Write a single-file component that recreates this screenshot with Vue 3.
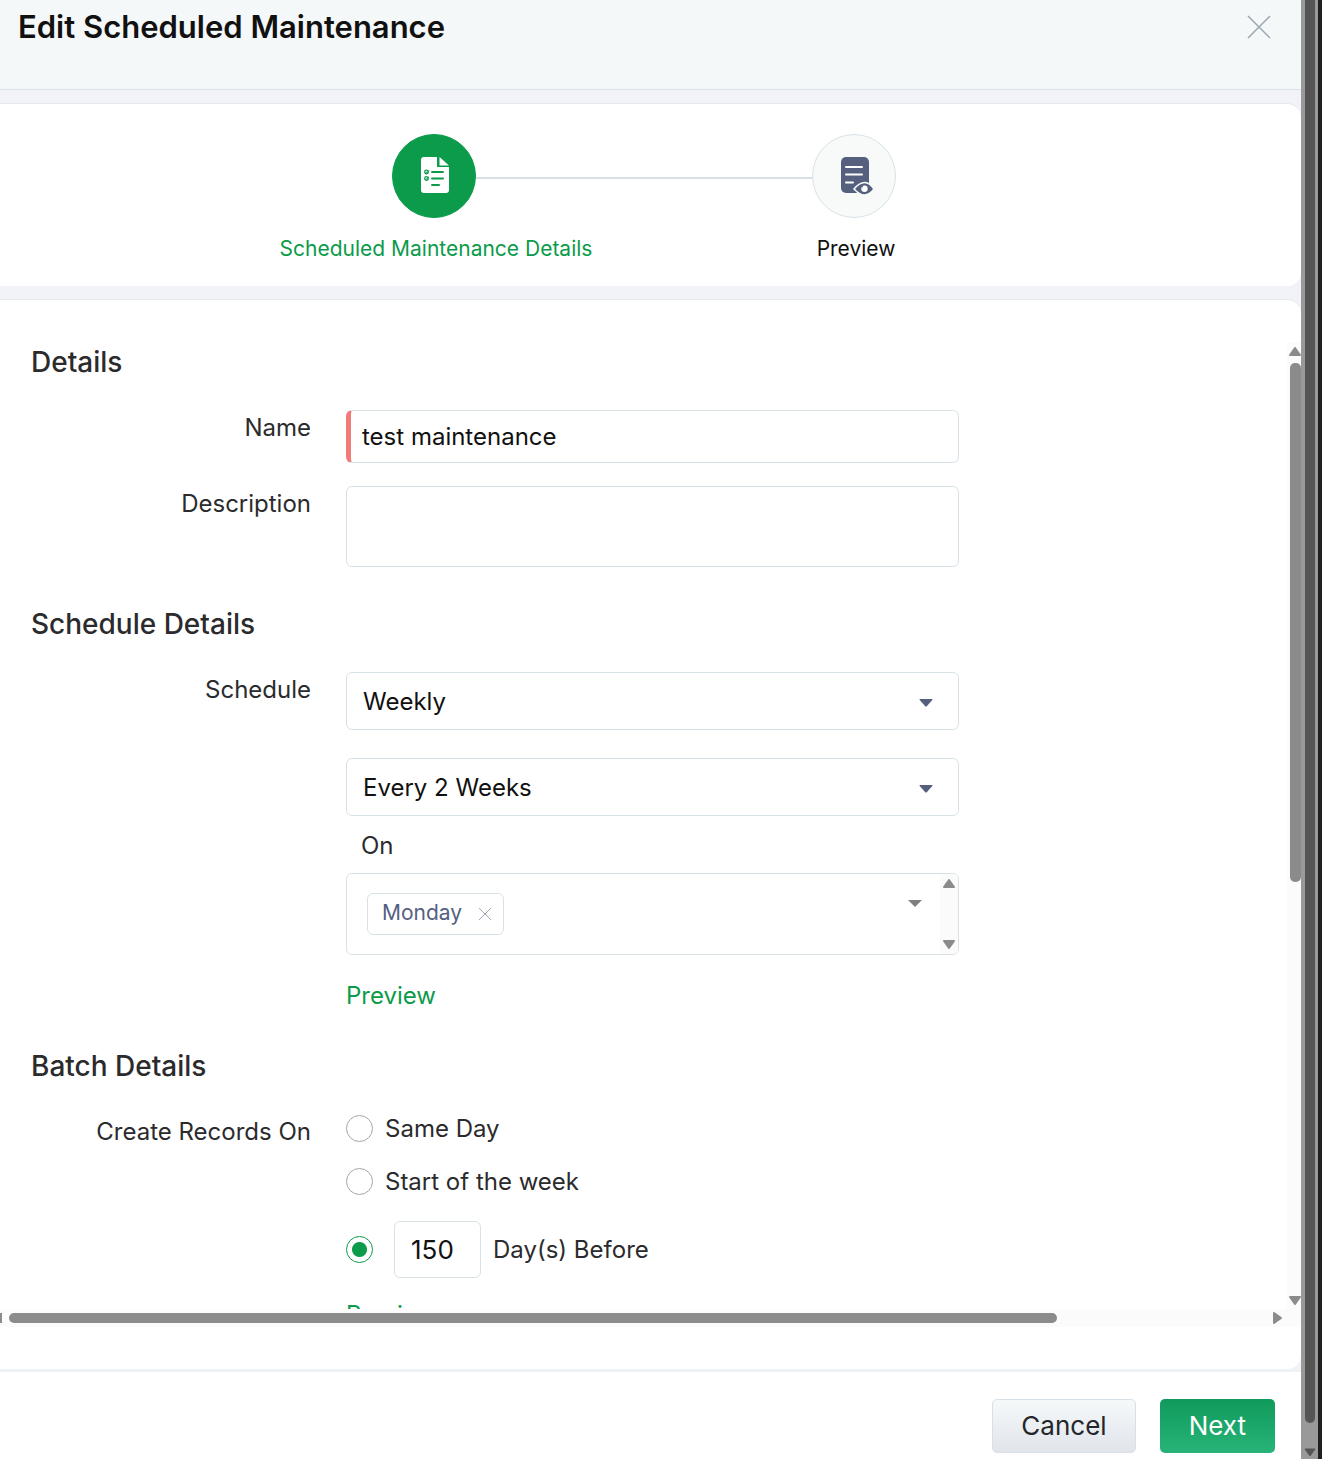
<script setup>
import { ref } from 'vue'

const name = ref('test maintenance')
const description = ref('')
const schedule = ref('Weekly')
const interval = ref('Every 2 Weeks')
const days = ref(['Monday'])
const createOn = ref('before')
const daysBefore = ref('150')

function removeDay(day) {
  days.value = days.value.filter((d) => d !== day)
}
</script>

<template>
  <div class="window">
    <main class="dialog">
      <header class="dialog-header">
        <h1>Edit Scheduled Maintenance</h1>
        <button class="icon-button" type="button" aria-label="Close">
          <svg width="24" height="24" viewBox="0 0 24 24"><path d="M1 1 23 23M23 1 1 23" stroke="#9ca7b2" stroke-width="1.5" fill="none" /></svg>
        </button>
      </header>

      <section class="card stepper-card">
        <ol class="stepper">
          <li class="step active">
            <span class="step-icon">
              <svg width="32" height="38" viewBox="-2 0 32 38">
                <path d="M4 0h13v10h12v23a3 3 0 0 1-3 3H4a3 3 0 0 1-3-3V3a3 3 0 0 1 3-3Z" fill="#fff" />
                <path d="M19.500 0v8.500H29Z" fill="#fff" />
                <path d="M12 15h11M12 21.500h11M12 28h7" stroke="#0b9b4a" stroke-width="2" stroke-linecap="round" />
                <circle cx="6.500" cy="15" r="1.800" fill="none" stroke="#0b9b4a" stroke-width="1.300" />
                <circle cx="6.500" cy="21.500" r="1.800" fill="none" stroke="#0b9b4a" stroke-width="1.300" />
                <path d="m6 15 1 .8 2-2.200M6 21.500l1 .8 2-2.200" fill="none" stroke="#0b9b4a" stroke-width="1" />
              </svg>
            </span>
            <span class="step-label">Scheduled Maintenance Details</span>
          </li>
          <li class="step">
            <span class="step-icon">
              <svg width="40" height="38" viewBox="-6 0 40 38">
                <rect x="1" y="0" width="28" height="36" rx="5" fill="#55607f" />
                <path d="M6 10h16M6 17.500h16M6 25.500h7" stroke="#fff" stroke-width="2" stroke-linecap="round" />
                <path d="M14 32q5.500-6.500 10.500-6.500T34 32q-4.500 6-9.500 6T14 32Z" fill="#55607f" stroke="#f8faf9" stroke-width="1.500" />
                <circle cx="24.500" cy="31.800" r="3.200" fill="#fff" />
                <circle cx="22.300" cy="29.800" r=".8" fill="#55607f" />
              </svg>
            </span>
            <span class="step-label">Preview</span>
          </li>
        </ol>
      </section>

      <section class="card form-card">
        <div class="scroll-area">
          <form class="form">
            <h2>Details</h2>
            <div class="row">
              <label class="label" for="name">Name</label>
              <input id="name" v-model="name" class="control required" type="text" />
            </div>
            <div class="row">
              <label class="label" for="description">Description</label>
              <textarea id="description" v-model="description" class="control description"></textarea>
            </div>

            <h2>Schedule Details</h2>
            <div class="row">
              <label class="label" for="schedule">Schedule</label>
              <div class="field">
                <div class="select">
                  <select id="schedule" v-model="schedule" class="control">
                    <option>Daily</option>
                    <option>Weekly</option>
                    <option>Monthly</option>
                  </select>
                  <svg class="caret" width="14" height="8" viewBox="0 0 14 8"><path d="M1 0h12q1 0 .3 1L8 7q-1 1-2 0L.7 1Q0 0 1 0Z" fill="#55607f" /></svg>
                </div>
                <div class="select interval">
                  <select v-model="interval" class="control" aria-label="Interval">
                    <option>Every Week</option>
                    <option>Every 2 Weeks</option>
                  </select>
                  <svg class="caret" width="14" height="8" viewBox="0 0 14 8"><path d="M1 0h12q1 0 .3 1L8 7q-1 1-2 0L.7 1Q0 0 1 0Z" fill="#55607f" /></svg>
                </div>
                <label class="sub-label" for="days">On</label>
                <div class="control multi">
                  <span v-for="day in days" :key="day" class="chip">
                    {{ day }}
                    <button class="icon-button" type="button" :aria-label="'Remove ' + day" @click="removeDay(day)">
                      <svg width="14" height="14" viewBox="0 0 14 14"><path d="m1 1 12 12M13 1 1 13" stroke="#a0a5b3" fill="none" /></svg>
                    </button>
                  </span>
                  <button id="days" class="icon-button multi-caret" type="button">
                    <svg width="14" height="8" viewBox="0 0 14 8"><path d="M0 0h14L7 7Z" fill="#808080" /></svg>
                  </button>
                  <span class="multi-scroll">
                    <svg width="12" height="10" viewBox="0 0 12 10"><path d="M6 1 11 8H1Z" fill="#8b8b8b" stroke="#8b8b8b" stroke-width="2" stroke-linejoin="round" /></svg>
                    <svg width="12" height="10" viewBox="0 0 12 10"><path d="M6 9 11 2H1Z" fill="#8b8b8b" stroke="#8b8b8b" stroke-width="2" stroke-linejoin="round" /></svg>
                  </span>
                </div>
                <a class="preview-link" href="#">Preview</a>
              </div>
            </div>

            <h2>Batch Details</h2>
            <div class="row">
              <span id="create-on" class="label">Create Records On</span>
              <div class="field" role="radiogroup" aria-labelledby="create-on">
                <label class="radio"><input v-model="createOn" type="radio" name="create" value="same" />Same Day</label>
                <label class="radio"><input v-model="createOn" type="radio" name="create" value="week" />Start of the week</label>
                <div class="radio before">
                  <input id="before" v-model="createOn" type="radio" name="create" value="before" />
                  <input v-model="daysBefore" class="control number" type="text" aria-label="Days before" />
                  <label for="before">Day(s) Before</label>
                </div>
                <a class="preview-link last" href="#">Preview</a>
              </div>
            </div>
          </form>
          <div class="scrollbar-y">
            <svg width="12" height="10" viewBox="0 0 12 10"><path d="M6 1 11 8H1Z" fill="#8b8b8b" stroke="#8b8b8b" stroke-width="2" stroke-linejoin="round" /></svg>
            <div class="track-y"><div class="thumb-y"></div></div>
            <svg width="12" height="10" viewBox="0 0 12 10"><path d="M6 9 11 2H1Z" fill="#8b8b8b" stroke="#8b8b8b" stroke-width="2" stroke-linejoin="round" /></svg>
          </div>
        </div>
        <div class="scrollbar-x">
          <span class="scroll-start"></span>
          <div class="track-x"><div class="thumb-x"></div></div>
          <svg width="10" height="12" viewBox="0 0 10 12"><path d="M9 6 2 1v10Z" fill="#8b8b8b" stroke="#8b8b8b" stroke-width="2" stroke-linejoin="round" /></svg>
        </div>
      </section>

      <footer class="dialog-footer">
        <button class="button" type="button">Cancel</button>
        <button class="button primary" type="button">Next</button>
      </footer>
    </main>

    <div class="page-scrollbar">
      <div class="page-thumb"></div>
      <svg width="12" height="10" viewBox="0 0 12 10"><path d="M6 9 11 2H1Z" fill="#555" stroke="#555" stroke-linejoin="round" /></svg>
    </div>
    <div class="backdrop"></div>
  </div>
</template>

<style>
body {
  margin: 0;
}
</style>

<style scoped>
* {
  box-sizing: border-box;
}

.window {
  display: flex;
  height: 100vh;
  overflow: hidden;
  font-family: Inter, "Liberation Sans", sans-serif;
  font-size: 24px;
  line-height: 34px;
  color: #2b2b2d;
}

svg {
  display: block;
  flex: none;
}

.dialog {
  flex: 1;
  min-width: 0;
  display: flex;
  flex-direction: column;
  background: #f1f3f8;
}

.dialog-header {
  display: flex;
  justify-content: space-between;
  align-items: flex-start;
  height: 90px;
  padding: 10px 30px 0 18px;
  margin-bottom: 13px;
  background: #f4f8f9;
  border-bottom: 1px solid #dbe2e9;
}

h1 {
  margin: 0;
  font-size: 31px;
  line-height: 34px;
  font-weight: 600;
  color: #111;
}

.icon-button {
  display: flex;
  padding: 0;
  border: 0;
  background: none;
}

.dialog-header .icon-button {
  padding-top: 5px;
}

.card {
  background: #fff;
  border-top: 1px solid #e6e9ec;
}

.stepper-card {
  border-radius: 0 14px 14px 0;
  margin-bottom: 13px;
  padding: 30px 13px 20px 0;
}

.stepper {
  display: flex;
  justify-content: center;
  margin: 0;
  padding: 0;
  list-style: none;
}

.step {
  position: relative;
  display: flex;
  flex-direction: column;
  align-items: center;
  gap: 14px;
  width: 420px;
  font-size: 21px;
  color: #111;
}

.step.active {
  color: #0b9b4a;
}

.step.active::after {
  content: "";
  position: absolute;
  left: 252px;
  top: 43px;
  width: 336px;
  height: 2px;
  background: #d6e0e6;
}

.step-icon {
  display: flex;
  align-items: center;
  justify-content: center;
  width: 84px;
  height: 84px;
  border: 1px solid #d8e2e6;
  border-radius: 50%;
  background: #f8faf9;
}

.active .step-icon {
  background: #0b9b4a;
  border-color: #0b9b4a;
}

.step-label {
  padding-left: 4px;
}

.form-card {
  flex: 1;
  min-height: 0;
  display: flex;
  flex-direction: column;
  padding: 42px 0;
  border-radius: 0 14px 14px 0;
}

.scroll-area {
  flex: 1;
  min-height: 0;
  display: flex;
}

.form {
  flex: 1;
  min-width: 0;
  padding-left: 31px;
  overflow: hidden;
}

h2 {
  margin: 37px 0 28px;
  font-size: 28px;
  line-height: 40px;
  font-weight: 500;
}

h2:first-child {
  margin-top: 0;
}

.row {
  display: grid;
  grid-template-columns: 280px minmax(0, 613px);
  gap: 35px;
}

.row + .row {
  margin-top: 23px;
}

.label {
  line-height: 36px;
  text-align: right;
}

.control {
  display: block;
  width: 100%;
  height: 58px;
  padding: 0 16px;
  border: 1px solid #d8e2e6;
  border-radius: 6px;
  background: #fff;
  font: inherit;
  color: #111;
  appearance: none;
}

.required {
  height: 53px;
  padding-left: 11px;
  border-left: 5px solid #f07c7a;
}

.description {
  height: 81px;
  padding-top: 8px;
  resize: none;
}

.select {
  position: relative;
}

.select .control {
  padding-top: 2px;
}

.interval {
  margin-top: 28px;
}

.caret {
  position: absolute;
  right: 26px;
  top: 27px;
}

.sub-label {
  display: block;
  padding: 13px 15px 10px;
}

.multi {
  display: flex;
  align-items: center;
  height: 82px;
  padding: 0 0 0 20px;
  overflow: hidden;
}

.chip {
  display: flex;
  align-items: center;
  gap: 16px;
  height: 42px;
  padding: 0 11px 2px 14px;
  border: 1px solid #d8e2e6;
  border-radius: 6px;
  font-size: 21px;
  color: #55607f;
}

.chip .icon-button {
  padding-top: 2px;
}

.multi-caret {
  margin: 0 18px 20px auto;
}

.multi-scroll {
  display: flex;
  flex-direction: column;
  justify-content: space-between;
  align-items: center;
  align-self: stretch;
  width: 18px;
  padding: 5px 0;
  background: #fbfbfb;
}

.preview-link {
  display: block;
  width: max-content;
  margin-top: 28px;
  line-height: 26px;
  color: #0b9b4a;
  text-decoration: none;
}

.preview-link.last {
  margin-top: 24px;
}

.radio {
  display: flex;
  align-items: center;
  gap: 12px;
  height: 28px;
  margin-bottom: 25px;
  padding-top: 1px;
}

.radio input[type="radio"] {
  appearance: none;
  flex: none;
  width: 27px;
  height: 27px;
  margin: 0;
  border: 1px solid #a6a6a6;
  border-radius: 50%;
  background: #fff;
}

.radio input[type="radio"]:checked {
  border-color: #0b9b4a;
  background: radial-gradient(circle, #0b9b4a 7px, #fff 8px);
}

.before {
  height: 58px;
  margin-bottom: 0;
}

.number {
  width: 87px;
  height: 57px;
  margin-left: 9px;
  font-size: 26px;
}

.scrollbar-y {
  display: flex;
  flex-direction: column;
  align-items: flex-end;
  width: 14px;
  padding: 5px 0 4px;
  background: #fbfbfb;
}

.track-y {
  flex: 1;
  width: 11px;
  padding: 6px 0;
}

.thumb-y {
  height: 56%;
  border-radius: 5px;
  background: #8b8b8b;
}

.scrollbar-x {
  display: flex;
  align-items: center;
  height: 18px;
  padding-right: 19px;
  background: #fbfbfb;
}

.scroll-start {
  width: 2px;
  height: 10px;
  background: #8b8b8b;
}

.track-x {
  flex: 1;
  padding-left: 7px;
}

.thumb-x {
  width: 83%;
  height: 10px;
  border-radius: 5px;
  background: #8b8b8b;
}

.dialog-footer {
  display: flex;
  justify-content: flex-end;
  align-items: flex-end;
  gap: 24px;
  height: 90px;
  padding: 0 26px 6px;
  border-top: 3px solid #eef2f6;
  background: #fff;
}

.button {
  height: 54px;
  padding: 0 28px;
  border: 1px solid #d8e0e7;
  border-radius: 5px;
  background: linear-gradient(#f5f9fa, #e1e5eb);
  font: inherit;
  font-size: 26px;
  color: #24262b;
}

.primary {
  border-color: transparent;
  background: linear-gradient(#109a5c, #28b478) border-box;
  color: #fff;
}

.page-scrollbar {
  display: flex;
  flex-direction: column;
  align-items: center;
  gap: 24px;
  width: 17px;
  padding-bottom: 2px;
  background: #999;
}

.page-thumb {
  flex: 1;
  width: 10px;
  border-radius: 0 0 5px 5px;
  background: #555;
}

.backdrop {
  width: 4px;
  background: #1e2024;
}
</style>
